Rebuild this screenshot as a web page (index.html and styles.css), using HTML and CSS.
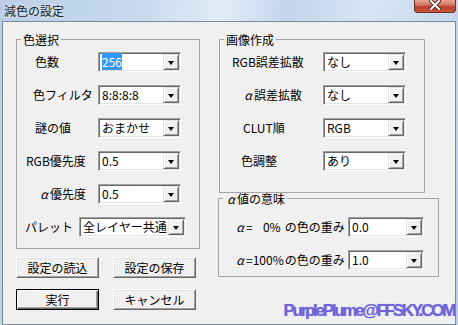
FILE: index.html
```html
<!DOCTYPE html>
<html lang="ja">

<head>
    <meta charset="UTF-8">
    <title>減色の設定</title>
    <link rel="stylesheet" href="styles.css">
</head>

<body>
    <div class="window">
        <div class="titlebar">
            <span class="title">減色の設定</span>
            <button class="close" title="閉じる">
                <svg width="12" height="10" viewBox="0 0 12 10">
                    <path d="M2 1 L10 9 M10 1 L2 9" stroke="#5a2418" stroke-width="4" stroke-linecap="square" />
                    <path d="M2 1 L10 9 M10 1 L2 9" stroke="#fff" stroke-width="2" stroke-linecap="square" />
                </svg>
            </button>
        </div>

        <div class="client">
            <div class="col-left">
                <fieldset class="group g-color">
                    <legend>色選択</legend>
                    <div class="row">
                        <span class="lbl ind-18">色数</span>
                        <div class="combo"><span class="val"><span class="sel">256</span></span><span class="drop"></span></div>
                    </div>
                    <div class="row">
                        <span class="lbl ind-16">色フィルタ</span>
                        <div class="combo"><span class="val">8:8:8:8</span><span class="drop"></span></div>
                    </div>
                    <div class="row">
                        <span class="lbl ind-18">謎の値</span>
                        <div class="combo"><span class="val">おまかせ</span><span class="drop"></span></div>
                    </div>
                    <div class="row">
                        <span class="lbl ind-9">RGB優先度</span>
                        <div class="combo"><span class="val">0.5</span><span class="drop"></span></div>
                    </div>
                    <div class="row">
                        <span class="lbl ind-21"><span class="alpha">α</span>優先度</span>
                        <div class="combo"><span class="val">0.5</span><span class="drop"></span></div>
                    </div>
                    <div class="row">
                        <span class="lbl lbl-short ind-8">パレット</span>
                        <div class="combo combo-wide"><span class="val">全レイヤー共通</span><span class="drop"></span></div>
                    </div>
                </fieldset>

                <div class="btns">
                    <button class="btn">設定の読込</button>
                    <button class="btn">設定の保存</button>
                    <button class="btn btn-default">実行</button>
                    <button class="btn">キャンセル</button>
                </div>
            </div>

            <div class="col-right">
                <fieldset class="group g-image">
                    <legend>画像作成</legend>
                    <div class="row">
                        <span class="lbl ind-12">RGB誤差拡散</span>
                        <div class="combo"><span class="val">なし</span><span class="drop"></span></div>
                    </div>
                    <div class="row">
                        <span class="lbl ind-22"><span class="alpha">α</span>誤差拡散</span>
                        <div class="combo"><span class="val">なし</span><span class="drop"></span></div>
                    </div>
                    <div class="row">
                        <span class="lbl ind-23">CLUT順</span>
                        <div class="combo"><span class="val">RGB</span><span class="drop"></span></div>
                    </div>
                    <div class="row">
                        <span class="lbl ind-21">色調整</span>
                        <div class="combo"><span class="val">あり</span><span class="drop"></span></div>
                    </div>
                </fieldset>

                <fieldset class="group g-alpha">
                    <legend><span class="alpha">α</span>値の意味</legend>
                    <div class="row">
                        <span class="lbl ind-15"><span class="alpha">α</span>=<span class="pct">0%</span>の色の重み</span>
                        <div class="combo"><span class="val">0.0</span><span class="drop"></span></div>
                    </div>
                    <div class="row">
                        <span class="lbl ind-15"><span class="alpha">α</span>=<span class="pct">100%</span>の色の重み</span>
                        <div class="combo"><span class="val">1.0</span><span class="drop"></span></div>
                    </div>
                </fieldset>

                <div class="sign">PurplePlume@FFSKY.COM</div>
            </div>
        </div>
    </div>
</body>

</html>
```

FILE: styles.css
```css
html,
body {
    margin: 0;
    padding: 0;
}

body {
    width: 458px;
    height: 325px;
    overflow: hidden;
    font-family: "Noto Sans CJK JP", "Liberation Sans", sans-serif;
    font-size: 12px;
    color: #000;
    background: linear-gradient(100deg, #b7cde6 0%, #c8daee 28%, #e2ecf7 44%, #c3d6ec 56%, #d6e4f3 72%, #b9cfe8 100%);
}

.window {
    display: flex;
    flex-direction: column;
    height: 325px;
}

/* title bar */
.titlebar {
    height: 22px;
    display: flex;
    justify-content: space-between;
    align-items: flex-start;
}

.title {
    margin: 3px 0 0 4px;
    line-height: 16px;
    font-size: 12px;
    color: #222;
    text-shadow: 0 0 6px rgba(255, 255, 255, 0.9);
}

.close {
    width: 42px;
    height: 13px;
    margin-right: 2px;
    padding: 0;
    border: 1px solid #6e3026;
    border-top: none;
    border-radius: 0 0 4px 4px;
    background: linear-gradient(#e8a596 0%, #d0705f 45%, #bc3f2c 55%, #c9573f 100%);
    display: flex;
    justify-content: center;
    align-items: flex-start;
}

.close svg {
    display: block;
}

/* client area */
.client {
    height: 298px;
    margin: 0 2px 0 2px;
    border: 1px solid #7b8a9b;
    background: #f0f0f0;
    padding: 11px 0 0 13px;
    display: flex;
    gap: 18px;
}

.col-left {
    width: 184px;
}

.col-right {
    width: 237px;
    display: flex;
    flex-direction: column;
    align-items: flex-start;
}

/* group boxes */
.group {
    margin: 0;
    padding: 6px 0 11px 0;
    border: 1px solid #a5a5a5;
    min-inline-size: 0;
    box-sizing: border-box;
}

.group legend {
    margin-left: 4px;
    padding: 0 2px;
    line-height: 13px;
    height: 13px;
}

.g-color {
    width: 184px;
}

.g-image {
    width: 206px;
    margin-left: 1px;
    padding-bottom: 21px;
}

.g-alpha {
    width: 221px;
    margin-top: -1px;
    padding: 12px 0 6px 0;
}

.row {
    display: flex;
    align-items: center;
    height: 20px;
}

.row + .row {
    margin-top: 13px;
}

.lbl {
    box-sizing: border-box;
    white-space: nowrap;
    line-height: 16px;
}

.g-color .lbl {
    width: 81px;
}

.g-color .lbl-short {
    width: 62px;
}

.g-image .lbl {
    width: 103px;
}

.g-alpha .lbl {
    width: 129px;
}

.ind-8 { padding-left: 8px; }
.ind-9 { padding-left: 9px; }
.ind-12 { padding-left: 12px; }
.ind-15 { padding-left: 15px; }
.ind-16 { padding-left: 16px; }
.ind-18 { padding-left: 18px; }
.ind-21 { padding-left: 21px; }
.ind-22 { padding-left: 22px; }
.ind-23 { padding-left: 23px; }

.alpha {
    display: inline-block;
    width: 12px;
    text-align: center;
    font-style: italic;
}

.pct {
    display: inline-block;
    width: 28px;
    margin-right: 4px;
    text-align: right;
}

/* combo boxes */
.combo {
    box-sizing: border-box;
    width: 83px;
    height: 20px;
    background: #fff;
    border: 1px solid;
    border-color: #a0a0a0 #fff #fff #a0a0a0;
    box-shadow: inset 1px 1px 0 #696969, inset -1px -1px 0 #e3e3e3;
    display: flex;
    align-items: center;
    padding: 1px;
}

.g-alpha .combo {
    width: 76px;
}

.combo-wide {
    width: 107px;
}

.val {
    flex: 1;
    padding-left: 2px;
    line-height: 16px;
    white-space: nowrap;
}

.sel {
    background: #3399ff;
    color: #fff;
}

.drop {
    box-sizing: border-box;
    width: 16px;
    height: 16px;
    background: #f0f0f0;
    border: 1px solid;
    border-color: #e3e3e3 #696969 #696969 #e3e3e3;
    box-shadow: inset 1px 1px 0 #fff, inset -1px -1px 0 #a0a0a0;
    display: flex;
    justify-content: center;
    align-items: center;
}

.drop::after {
    content: "";
    border-left: 3.5px solid transparent;
    border-right: 3.5px solid transparent;
    border-top: 4px solid #000;
    margin-top: 1px;
}

/* push buttons */
.btns {
    margin-top: 8px;
    display: grid;
    grid-template-columns: 83px 83px;
    column-gap: 14px;
    row-gap: 11px;
}

.btn {
    box-sizing: border-box;
    height: 21px;
    padding: 0;
    font-family: "Noto Sans CJK JP", "Liberation Sans", sans-serif;
    font-size: 12px;
    line-height: 14px;
    color: #000;
    background: #f0f0f0;
    border: 1px solid;
    border-color: #fff #696969 #696969 #fff;
    box-shadow: inset 1px 1px 0 #e3e3e3, inset -1px -1px 0 #a0a0a0;
}

.btn-default {
    border: 1px solid #000;
    box-shadow: inset 1px 1px 0 #fff, inset -1px -1px 0 #696969, inset -2px -2px 0 #a0a0a0;
}

/* signature */
.sign {
    align-self: flex-end;
    margin: 25px 1px 0 0;
    font-family: "Liberation Sans", Arial, sans-serif;
    font-weight: bold;
    font-size: 17px;
    line-height: 17px;
    letter-spacing: -2.3px;
    color: #6f63d8;
    text-shadow: 0 0 1px #9b93ea;
}
```
